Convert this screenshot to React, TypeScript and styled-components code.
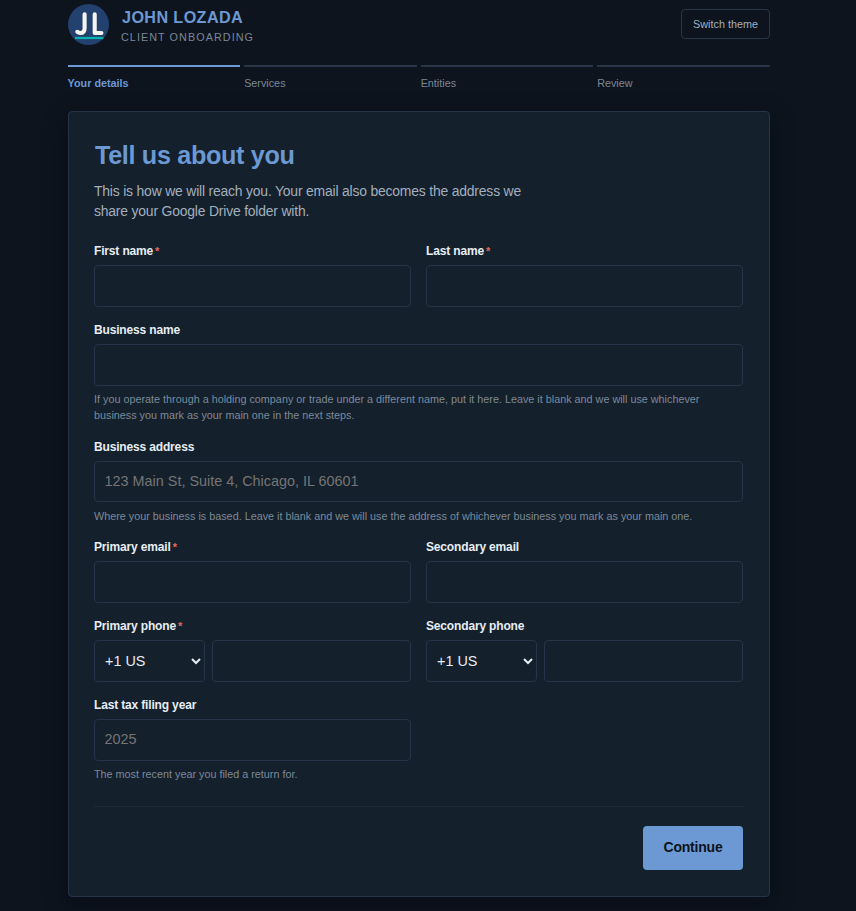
import React from "react";
import styled, { createGlobalStyle } from "styled-components";

const GlobalStyle = createGlobalStyle`
  * { box-sizing: border-box; }
  html { color-scheme: dark; }
  body {
    margin: 0;
    height: 911px;
    overflow: hidden;
    background: #0d141e;
    font-family: "Liberation Sans", Arial, sans-serif;
  }
  h1, p { margin: 0; }
`;

const Page = styled.main`
  width: 702px;
  height: 911px;
  margin-left: 68px;
  padding-top: 4px;
`;

const Header = styled.header`
  display: flex;
  align-items: center;
  height: 41px;
`;

const Brand = styled.div`
  flex: 1;
  margin-left: 12px;
`;

const BrandName = styled.div`
  color: #6c99d3;
  font-size: 16.2px;
  line-height: 19px;
  font-weight: 700;
  letter-spacing: 0.38px;
  padding-left: 1px;
`;

const BrandTag = styled.div`
  color: #7c8796;
  font-size: 10.8px;
  line-height: 14px;
  margin-top: 3px;
  margin-bottom: -2px;
  letter-spacing: 1.06px;
`;

const ThemeButton = styled.button`
  width: 89px;
  height: 30px;
  padding: 0;
  margin-top: -2px;
  border: 1px solid #263547;
  border-radius: 4px;
  background: transparent;
  color: #a2afbe;
  font: 10.8px "Liberation Sans", Arial, sans-serif;
`;

const Steps = styled.nav`
  display: grid;
  grid-template-columns: repeat(4, 1fr);
  gap: 4px;
  margin: 20px 0.3px 0 -0.4px;
`;

const Step = styled.div<{ $active?: boolean }>`
  height: 26px;
  padding-top: 10px;
  border-top: 2px solid ${(p) => (p.$active ? "#6c99d3" : "#263547")};
  color: ${(p) => (p.$active ? "#6c99d3" : "#7c8796")};
  font-size: 10.8px;
  line-height: 13px;
  font-weight: ${(p) => (p.$active ? 700 : 400)};
`;

const Card = styled.section`
  height: 786px;
  margin-top: 20px;
  padding: 28px 26px 26px 25px;
  border: 1px solid #26344a;
  border-radius: 4px;
  background: #14202b;
  box-shadow: 0 7px 25px rgba(4, 5, 16, 0.4);
`;

const Title = styled.h1`
  color: #6c99d3;
  font-size: 25.2px;
  line-height: 31px;
  font-weight: 700;
  letter-spacing: -0.33px;
  padding-left: 1px;
`;

const Lead = styled.p`
  width: 450px;
  margin-top: 10px;
  color: #a2afbe;
  font-size: 13.95px;
  line-height: 20px;
  letter-spacing: -0.2px;
`;

const Form = styled.form`
  display: grid;
  grid-template-columns: 1fr 1fr;
  column-gap: 15px;
  row-gap: 15px;
  margin-top: 22px;
`;

const FieldBox = styled.div<{ $wide?: boolean }>`
  grid-column: ${(p) => (p.$wide ? "1 / -1" : "auto")};
  min-width: 0;
`;

const Label = styled.label<{ $tall?: boolean }>`
  display: block;
  height: ${(p) => (p.$tall ? 23 : 22)}px;
  color: #e7edf4;
  font-size: 12px;
  line-height: ${(p) => (p.$tall ? 19 : 17)}px;
  font-weight: 700;
  letter-spacing: -0.16px;
`;

const Required = styled.span`
  margin-left: 2px;
  color: #e56a61;
  font-size: 11px;
`;

const Input = styled.input<{ $short?: boolean }>`
  display: block;
  width: 100%;
  min-width: 0;
  height: ${(p) => (p.$short ? 41 : 42)}px;
  padding: 0 10px ${(p) => (p.$short ? 1 : 2)}px 9.6px;
  border: 1px solid #26344a;
  border-radius: 4px;
  outline: none;
  background: #14202b;
  color: #e7edf4;
  font: 14.4px "Liberation Sans", Arial, sans-serif;
  &::placeholder { color: #757575; opacity: 1; }
`;

const Select = styled.select`
  width: 111px;
  height: 42px;
  flex: none;
  padding: 0 0 0 6px;
  border: 1px solid #26344a;
  border-radius: 4px;
  background: #14202b;
  color: #e7edf4;
  font: 14.4px "Liberation Sans", Arial, sans-serif;
`;

const PhoneRow = styled.div`
  display: flex;
  gap: 7px;
`;

const Hint = styled.p<{ $low?: boolean }>`
  margin-top: ${(p) => (p.$low ? 6 : 5)}px;
  color: #7c899a;
  font-size: 10.8px;
  line-height: 16px;
`;

const Footer = styled.footer`
  display: flex;
  justify-content: flex-end;
  margin-top: 24px;
  padding-top: 19px;
  border-top: 1px solid #1d2a37;
`;

const Continue = styled.button`
  width: 100px;
  height: 44px;
  padding: 0 0 2px;
  border: 0;
  border-radius: 4px;
  background: #6c99d3;
  color: #0d141e;
  font: 700 14px "Liberation Sans", Arial, sans-serif;
  letter-spacing: -0.2px;
`;

function Logo() {
  return (
    <svg width="41" height="41" viewBox="0 0 41 41" fill="none" aria-hidden="true">
      <circle cx="20.5" cy="20.5" r="20.5" fill="#23416e" />
      <path d="M16.6 10.2v14c0 3.7-1.6 4.8-4.2 4.8-1.3 0-2.3-.4-3.1-1.2" stroke="#f5f4ee" strokeWidth="4.1" strokeLinecap="round" strokeLinejoin="round" />
      <path d="M26.7 10.2V29h6.7" stroke="#f5f4ee" strokeWidth="4.1" strokeLinecap="round" strokeLinejoin="round" />
      <path d="M7 34h28.3" stroke="#08b2ae" strokeWidth="2.2" />
    </svg>
  );
}

type FieldProps = {
  label: string;
  required?: boolean;
  wide?: boolean;
  short?: boolean;
  phone?: boolean;
  placeholder?: string;
  hint?: string;
};

function Field({ label, required, wide, short, phone, placeholder, hint }: FieldProps) {
  return (
    <FieldBox $wide={wide}>
      <Label $tall={short}>
        {label}
        {required && <Required>*</Required>}
      </Label>
      {phone ? (
        <PhoneRow>
          <Select aria-label="Country code">
            <option>+1 US</option>
          </Select>
          <Input aria-label={label} />
        </PhoneRow>
      ) : (
        <Input aria-label={label} placeholder={placeholder} $short={short} />
      )}
      {hint && <Hint $low={short}>{hint}</Hint>}
    </FieldBox>
  );
}

export default function App() {
  return (
    <>
      <GlobalStyle />
      <Page>
        <Header>
          <Logo />
          <Brand>
            <BrandName>JOHN LOZADA</BrandName>
            <BrandTag>CLIENT ONBOARDING</BrandTag>
          </Brand>
          <ThemeButton>Switch theme</ThemeButton>
        </Header>
        <Steps>
          <Step $active>Your details</Step>
          <Step>Services</Step>
          <Step>Entities</Step>
          <Step>Review</Step>
        </Steps>
        <Card>
          <Title>Tell us about you</Title>
          <Lead>
            This is how we will reach you. Your email also becomes the address we share your Google Drive folder with.
          </Lead>
          <Form>
            <Field label="First name" required />
            <Field label="Last name" required />
            <Field
              label="Business name"
              wide
              hint="If you operate through a holding company or trade under a different name, put it here. Leave it blank and we will use whichever business you mark as your main one in the next steps."
            />
            <Field
              label="Business address"
              wide
              short
              placeholder="123 Main St, Suite 4, Chicago, IL 60601"
              hint="Where your business is based. Leave it blank and we will use the address of whichever business you mark as your main one."
            />
            <Field label="Primary email" required />
            <Field label="Secondary email" />
            <Field label="Primary phone" required phone />
            <Field label="Secondary phone" phone />
            <Field label="Last tax filing year" placeholder="2025" hint="The most recent year you filed a return for." />
          </Form>
          <Footer>
            <Continue>Continue</Continue>
          </Footer>
        </Card>
      </Page>
    </>
  );
}
